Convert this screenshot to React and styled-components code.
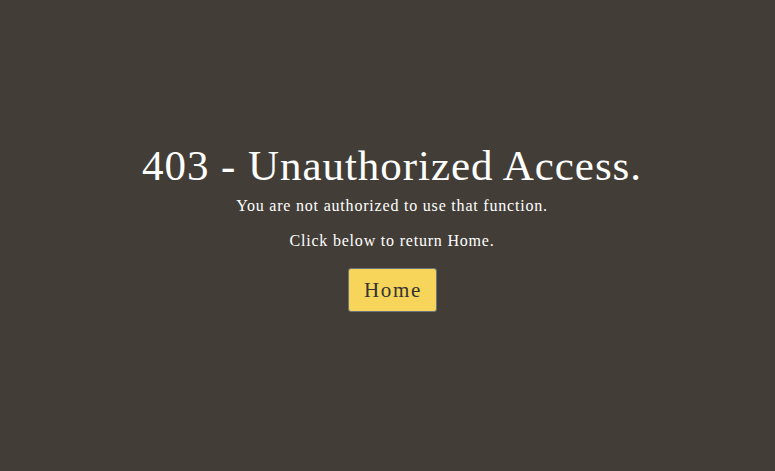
import React from "react";
import styled, { createGlobalStyle } from "styled-components";

const Global = createGlobalStyle`
  html, body { margin: 0; padding: 0; background: #423e37; }
  body { font-family: "Liberation Serif", "Times New Roman", serif; }
`;

const Page = styled.main`
  width: 775px;
  height: 471px;
  background: #423e37;
  display: flex;
  flex-direction: column;
  align-items: center;
  padding: 141px 0 0 9px;
  box-sizing: border-box;
  color: #ffffff;
`;

const Title = styled.h1`
  margin: 0;
  font-size: 43px;
  font-weight: 400;
  line-height: 50px;
  letter-spacing: 0.95px;
`;

const Text = styled.p`
  margin: ${(p) => p.$mt || 0}px 0 0;
  font-size: 16px;
  line-height: 22px;
  letter-spacing: 0.8px;
`;

const Button = styled.button`
  margin-top: 16px;
  width: 89px;
  height: 44px;
  background: #f7d55a;
  border: 1px solid #6c757d;
  border-radius: 3px;
  color: #333333;
  font-family: "Liberation Serif", "Times New Roman", serif;
  font-size: 21px;
  letter-spacing: 1.7px;
  padding: 0 0 0 2px;
  cursor: pointer;
`;

export default function App() {
  return (
    <>
      <Global />
      <Page>
        <Title>403 - Unauthorized Access.</Title>
        <Text $mt={4}>You are not authorized to use that function.</Text>
        <Text $mt={13}>Click below to return Home.</Text>
        <Button>Home</Button>
      </Page>
    </>
  );
}
